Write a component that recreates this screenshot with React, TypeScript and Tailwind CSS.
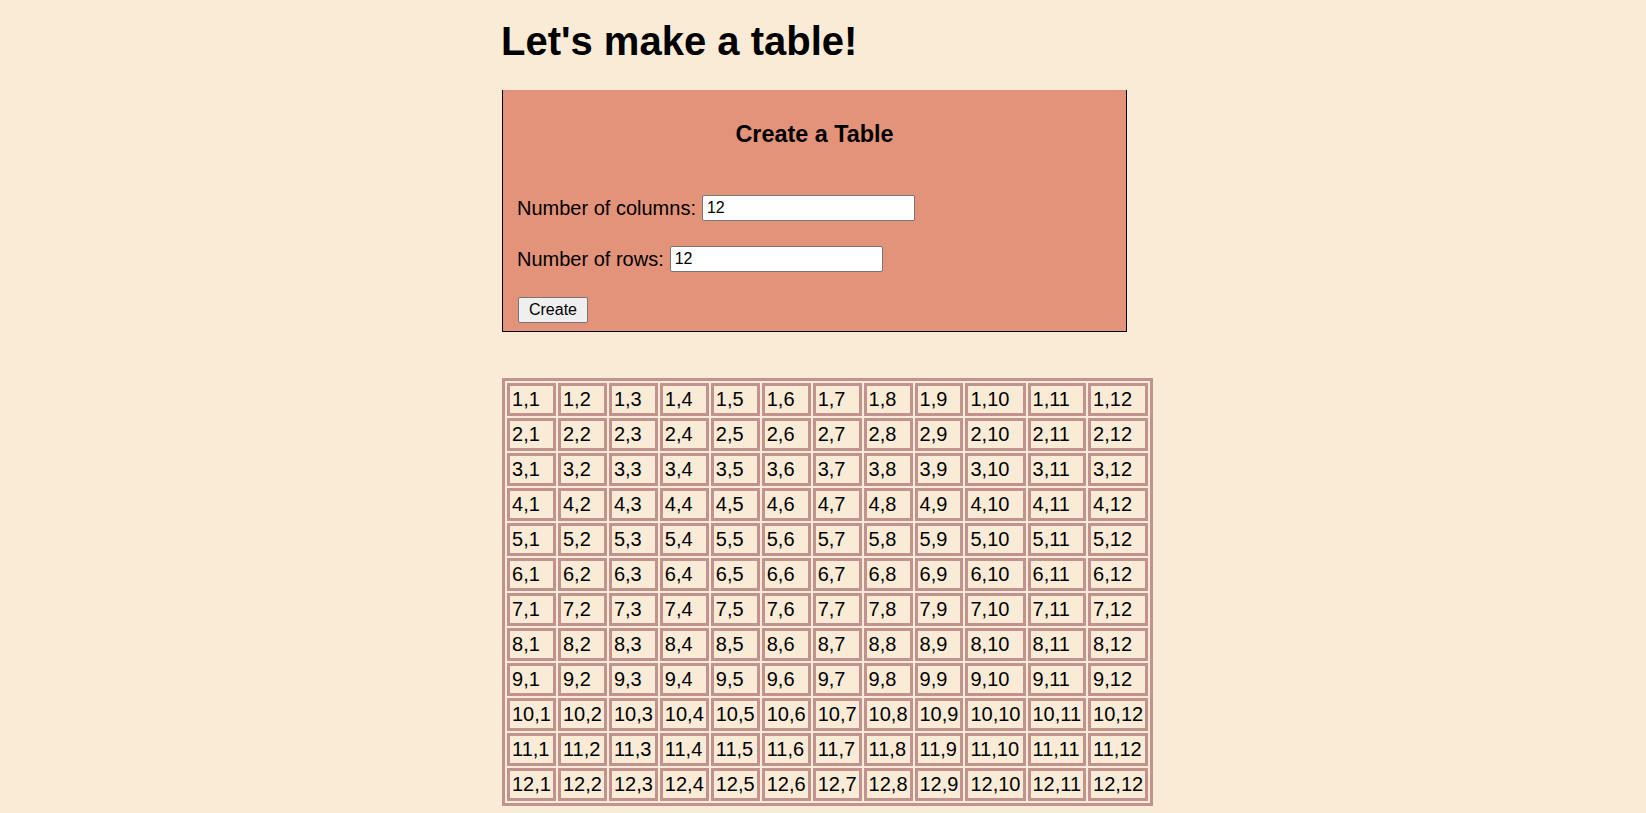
import React from "react";

const rows = Array.from({ length: 12 }, (_, i) => i + 1);
const cols = Array.from({ length: 12 }, (_, i) => i + 1);

export default function App() {
  return (
    <div className="min-h-[813px] bg-[#faebd7] text-black [font-family:'Liberation_Sans',Arial,sans-serif]">
      <div className="ml-[502px] pt-[19px] w-[660px]">
        <h1 className="m-0 text-[40px] leading-[45px] font-bold -ml-[1px]">Let's make a table!</h1>

        <div className="mt-[26px] w-[625px] h-[242px] bg-[#e2937a] border-x border-b border-black pl-[14px] pr-[13px]">
          <h3 className="m-0 pt-[31px] text-center text-[23.4px] leading-[27px] font-bold -ml-[14px] -mr-[13px]">Create a Table</h3>

          <div className="mt-[47px] flex items-center h-[26px] text-[20px] leading-[23px]">
            <span>Number of columns:</span>
            <input
              type="text"
              defaultValue="12"
              className="ml-[6px] w-[213px] h-[26px] bg-white border border-[#767676] rounded-[2px] px-[4px] text-[16px] leading-[18px] [font-family:'Liberation_Sans',Arial,sans-serif] outline-none"
            />
          </div>

          <div className="mt-[25px] flex items-center h-[26px] text-[20px] leading-[23px]">
            <span>Number of rows:</span>
            <input
              type="text"
              defaultValue="12"
              className="ml-[6px] w-[213px] h-[26px] bg-white border border-[#767676] rounded-[2px] px-[4px] text-[16px] leading-[18px] [font-family:'Liberation_Sans',Arial,sans-serif] outline-none"
            />
          </div>

          <div className="mt-[25px] flex">
            <button
              type="button"
              className="ml-[1px] w-[70px] h-[26px] bg-[#efefef] border border-[#767676] rounded-[2px] text-[16px] leading-[18px] text-black [font-family:'Liberation_Sans',Arial,sans-serif]"
            >
              Create
            </button>
          </div>
        </div>

        <table className="mt-[46px] border-separate border-spacing-[2px] border-[3px] border-solid border-[#c0938e] text-[20px] leading-[23px]">
          <tbody>
            {rows.map((r) => (
              <tr key={r}>
                {cols.map((c) => (
                  <td key={c} className="border-[3px] border-solid border-[#c0938e] p-[2px] text-left whitespace-nowrap">
                    {r},{c}
                  </td>
                ))}
              </tr>
            ))}
          </tbody>
        </table>
      </div>
    </div>
  );
}
